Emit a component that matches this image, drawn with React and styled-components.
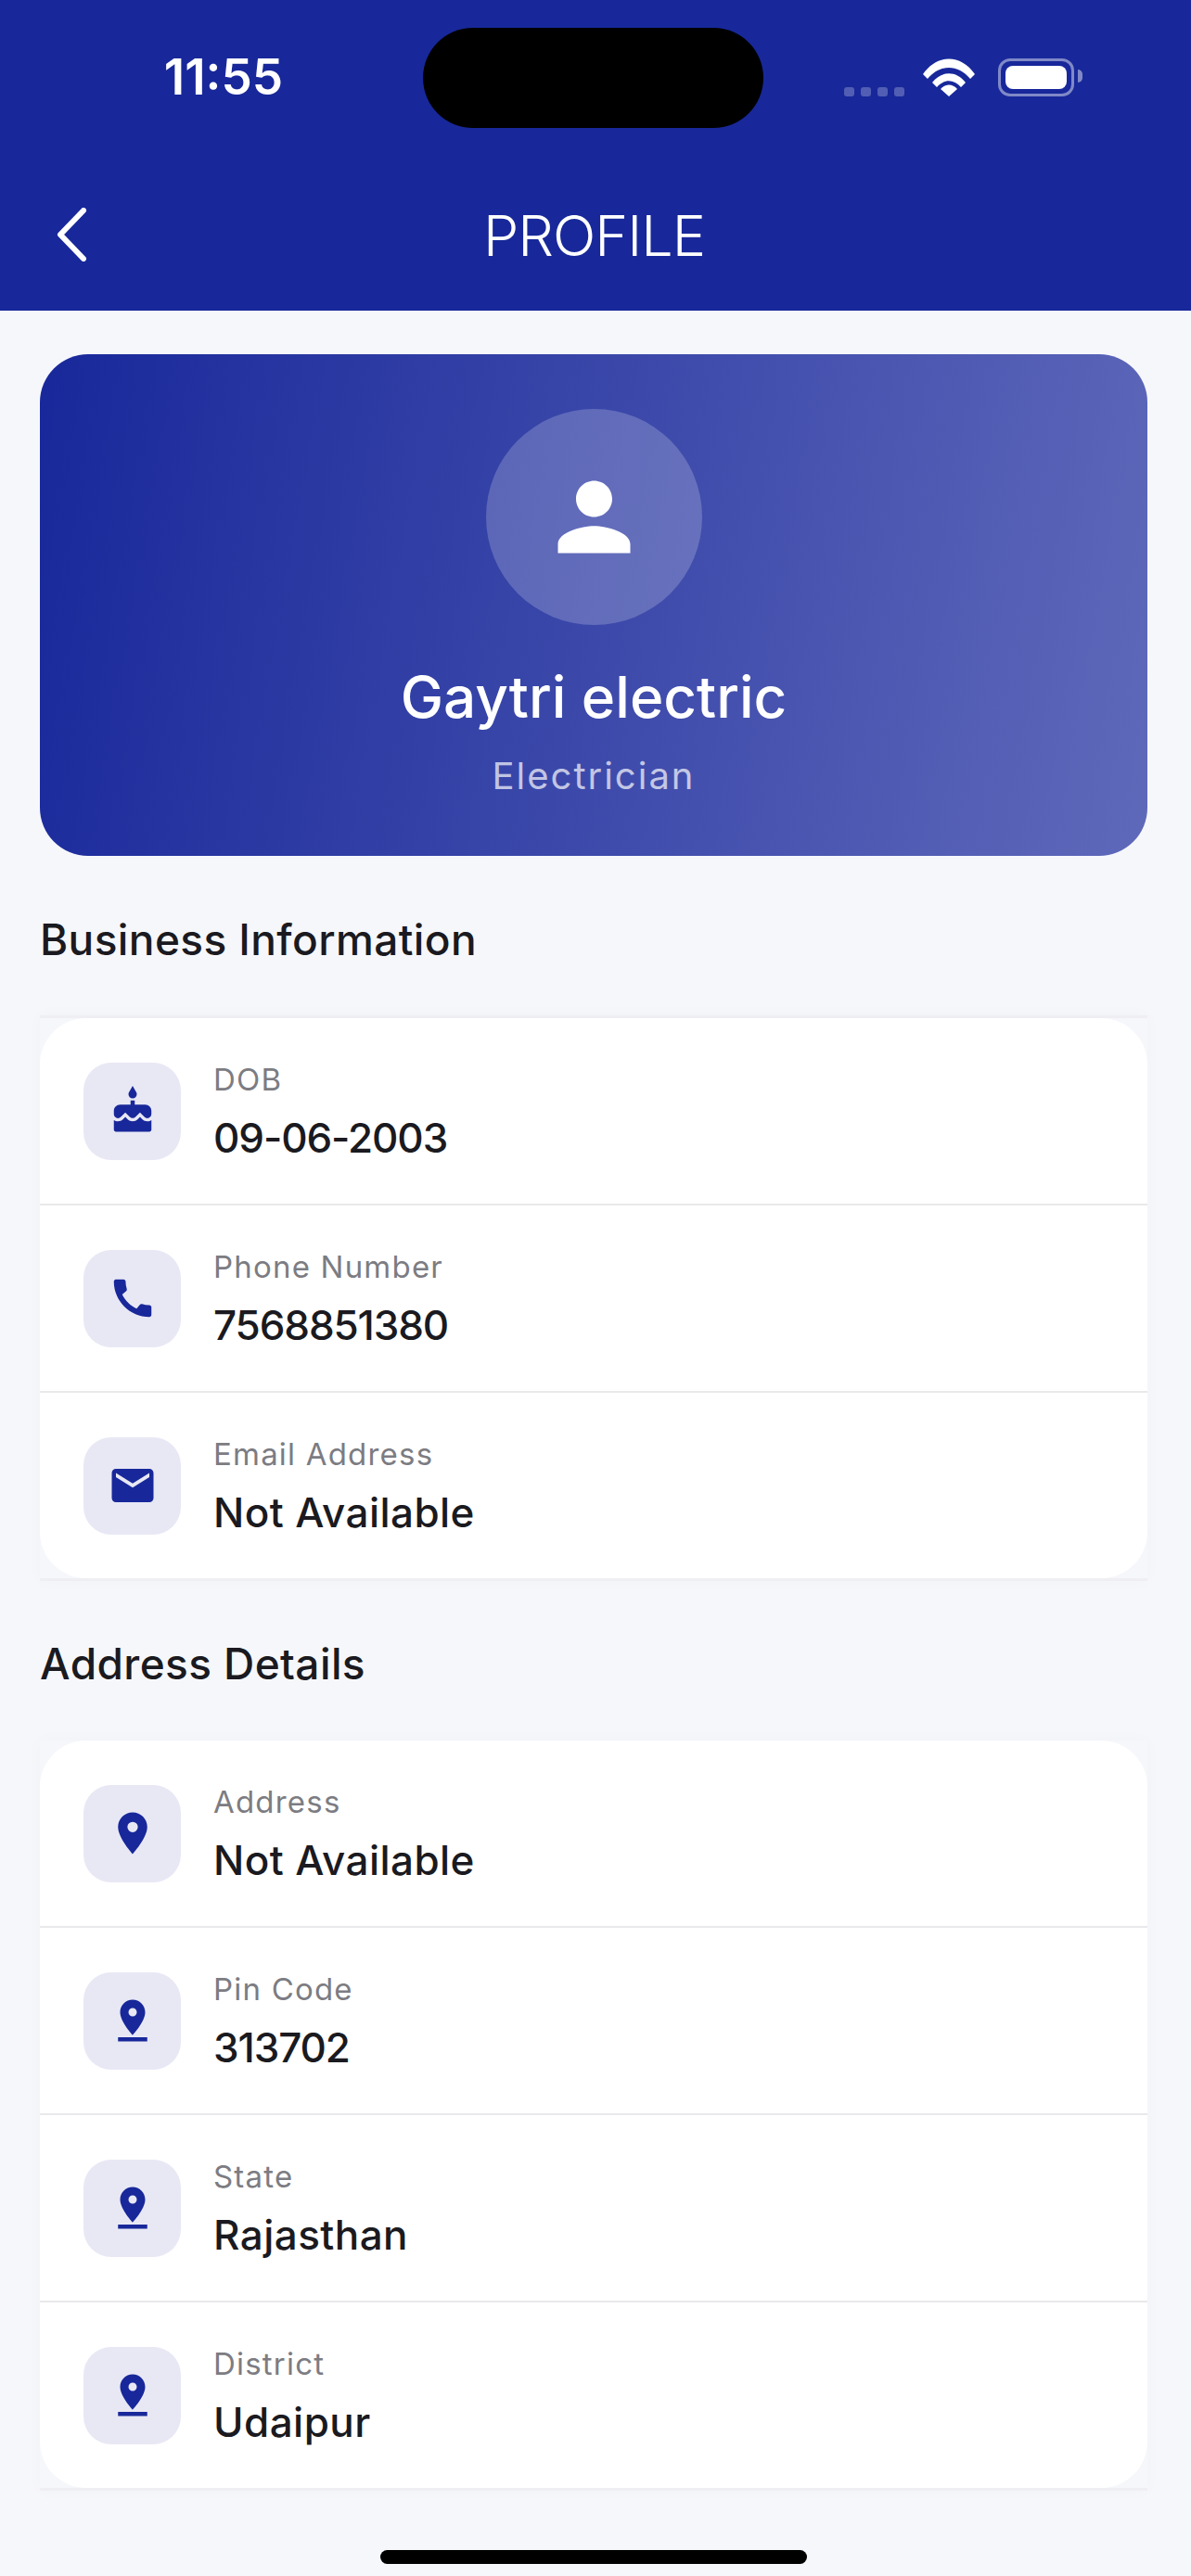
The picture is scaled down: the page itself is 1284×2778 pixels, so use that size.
import React from 'react';
import styled, { createGlobalStyle } from 'styled-components';
import { MdCake, MdCall, MdEmail, MdLocationOn, MdPerson, MdPinDrop } from 'react-icons/md';

const GlobalStyle = createGlobalStyle`
  html, body {
    margin: 0;
    padding: 0;
    background: #f6f7fb;
  }
  * {
    box-sizing: border-box;
  }
`;

const Root = styled.div`
  width: 1284px;
  height: 2778px;
  overflow: hidden;
  background: #f6f7fb;
  font-family: Inter, "Liberation Sans", sans-serif;
  color: #1a1a20;
`;

const Header = styled.header`
  height: 335px;
  background: #18289a;
  color: #fff;
`;

const StatusBar = styled.div`
  height: 168px;
  padding-top: 30px;
  display: grid;
  grid-template-columns: 456px 367px 1fr;
`;

const Clock = styled.div`
  height: 108px;
  line-height: 106px;
  text-align: center;
  padding-left: 26px;
  font-size: 53px;
  font-weight: 600;
`;

const Island = styled.div`
  height: 108px;
  border-radius: 54px;
  background: #000;
`;

const StatusIcons = styled.div`
  height: 74px;
  display: flex;
  align-items: flex-end;
  padding-left: 87px;
`;

const SignalDots = styled.div`
  display: flex;
  gap: 7px;
  margin-right: 20px;
`;

const Dot = styled.span`
  width: 11px;
  height: 10px;
  border-radius: 3px;
  background: rgba(255, 255, 255, 0.25);
`;

const Battery = styled.div`
  width: 82px;
  height: 41px;
  margin-left: 25px;
  padding: 5px;
  border: 3px solid rgba(255, 255, 255, 0.45);
  border-radius: 13px;
  position: relative;

  &::before {
    content: '';
    display: block;
    height: 100%;
    border-radius: 8px;
    background: #fff;
  }

  &::after {
    content: '';
    position: absolute;
    right: -12px;
    top: 9px;
    width: 5px;
    height: 14px;
    border-radius: 0 5px 5px 0;
    background: rgba(255, 255, 255, 0.45);
  }
`;

const NavBar = styled.div`
  height: 167px;
  padding: 3px 0 0 60px;
  display: flex;
  align-items: center;
  position: relative;
`;

const BackIcon = styled.svg`
  width: 36px;
  height: 58px;
  display: block;
`;

const NavTitle = styled.h1`
  position: absolute;
  left: 0;
  right: 3px;
  top: 50px;
  margin: 0;
  text-align: center;
  font-size: 61px;
  line-height: 72px;
  font-weight: 300;
  letter-spacing: -1px;
`;

const Content = styled.main`
  padding: 47px 47px 0 43px;
`;

const HeroCard = styled.section`
  height: 541px;
  padding-top: 59px;
  border-radius: 52px;
  display: flex;
  flex-direction: column;
  align-items: center;
  color: #fff;
  background: linear-gradient(100deg, #18289a 0%, #5f69ba 100%);
`;

const Avatar = styled.div`
  width: 233px;
  height: 233px;
  border-radius: 50%;
  display: flex;
  align-items: center;
  justify-content: center;
  background: rgba(255, 255, 255, 0.2);
`;

const Name = styled.h2`
  margin: 42px 0 0;
  font-size: 62px;
  line-height: 72px;
  font-weight: 500;
`;

const Role = styled.p`
  margin: 26px 0 0;
  font-size: 40px;
  line-height: 46px;
  font-weight: 400;
  letter-spacing: 2px;
  color: rgba(255, 255, 255, 0.7);
`;

const SectionTitle = styled.h3`
  margin: 0;
  height: 172px;
  padding-top: ${(p) => p.$top}px;
  font-size: 46px;
  line-height: 54px;
  font-weight: 500;
  letter-spacing: 0.4px;
`;

const CardFrame = styled.div`
  border-top: ${(p) => (p.$lined ? '3px solid #efeff3' : 'none')};
  border-bottom: 3px solid #efeff3;
  box-shadow: 0 0 18px rgba(30, 30, 70, 0.025);
`;

const Card = styled.div`
  border-radius: 50px;
  overflow: hidden;
  background: #fff;
`;

const Row = styled.div`
  height: 200px;
  padding-left: 47px;
  display: flex;
  align-items: center;
  gap: 35px;
  box-sizing: content-box;

  &:not(:last-child) {
    border-bottom: 2px solid #e9e9ec;
  }
`;

const IconBox = styled.div`
  width: 105px;
  height: 105px;
  border-radius: 30px;
  flex: none;
  display: flex;
  align-items: center;
  justify-content: center;
  color: #18289a;
  background: #e8e8f5;
`;

const RowText = styled.div`
  display: flex;
  flex-direction: column;
`;

const Label = styled.span`
  font-size: 33px;
  line-height: 40px;
  letter-spacing: 1.2px;
  color: #7c7c82;
`;

const Value = styled.span`
  margin-top: 17px;
  font-size: 44px;
  line-height: 52px;
  font-weight: 500;
  letter-spacing: ${(p) => (p.$numeric ? '-1.1px' : '0.45px')};
  color: #1a1a20;
`;

const HomeIndicator = styled.div`
  width: 460px;
  height: 15px;
  margin: 64px auto 0;
  border-radius: 8px;
  background: #000;
`;

const businessRows = [
  { icon: MdCake, label: 'DOB', value: '09-06-2003' },
  { icon: MdCall, label: 'Phone Number', value: '7568851380' },
  { icon: MdEmail, label: 'Email Address', value: 'Not Available' },
];

const addressRows = [
  { icon: MdLocationOn, label: 'Address', value: 'Not Available' },
  { icon: MdPinDrop, label: 'Pin Code', value: '313702' },
  { icon: MdPinDrop, label: 'State', value: 'Rajasthan' },
  { icon: MdPinDrop, label: 'District', value: 'Udaipur' },
];

function InfoCard({ rows, lined }) {
  return (
    <CardFrame $lined={lined}>
      <Card>
        {rows.map(({ icon: Icon, label, value }) => (
          <Row key={label}>
            <IconBox>
              <Icon size={54} />
            </IconBox>
            <RowText>
              <Label>{label}</Label>
              <Value $numeric={/^[\d-]+$/.test(value)}>{value}</Value>
            </RowText>
          </Row>
        ))}
      </Card>
    </CardFrame>
  );
}

export default function App() {
  return (
    <Root>
      <GlobalStyle />
      <Header>
        <StatusBar>
          <Clock>11:55</Clock>
          <Island />
          <StatusIcons>
            <SignalDots>
              <Dot />
              <Dot />
              <Dot />
              <Dot />
            </SignalDots>
            <svg width="56" height="41" viewBox="0 0 56 41">
              <path d="M0 17 C15 -5 41 -5 56 17 L51 22 C38 6 18 6 5 22 Z" fill="#fff" />
              <path d="M10 26 C20 13 36 13 46 26 L41 31 C33 22 23 22 15 31 Z" fill="#fff" />
              <path d="M19 33 C24 27 32 27 37 33 L28 41 Z" fill="#fff" />
            </svg>
            <Battery />
          </StatusIcons>
        </StatusBar>
        <NavBar>
          <BackIcon viewBox="0 0 36 58">
            <polyline
              points="30,3 5,29 30,55"
              fill="none"
              stroke="#fff"
              strokeWidth="6"
              strokeLinecap="round"
              strokeLinejoin="round"
            />
          </BackIcon>
          <NavTitle>PROFILE</NavTitle>
        </NavBar>
      </Header>
      <Content>
        <HeroCard>
          <Avatar>
            <MdPerson size={117} color="#fff" />
          </Avatar>
          <Name>Gaytri electric</Name>
          <Role>Electrician</Role>
        </HeroCard>
        <SectionTitle $top={63}>Business Information</SectionTitle>
        <InfoCard rows={businessRows} lined />
        <SectionTitle $top={62}>Address Details</SectionTitle>
        <InfoCard rows={addressRows} />
        <HomeIndicator />
      </Content>
    </Root>
  );
}
